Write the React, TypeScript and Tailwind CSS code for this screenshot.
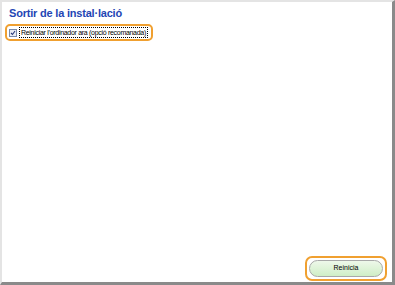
export default function App() {
  return (
    <div
      className="w-[395px] h-[285px] bg-white border-t-2 border-l-2 border-t-[#e4e4e4] border-l-[#e4e4e4] border-r-[3px] border-b-[3px] border-r-[#8a8a8a] border-b-[#8a8a8a] flex flex-col"
      style={{ fontFamily: '"Liberation Sans", Arial, sans-serif' }}
    >
      <div className="pl-[7px] pt-[5px] text-[11px] font-bold tracking-[-0.2px] text-[#2446b4] leading-[13px]">
        Sortir de la instal·lació
      </div>
      <div className="ml-[3px] mt-[4px] self-start flex items-center gap-[2px] border-2 border-[#f0a030] rounded-[5px] pl-[2px] pr-[3px] py-[1px]">
        <span className="w-[8px] h-[8px] border border-[#7a8aa8] bg-[#e8ecf4] flex items-center justify-center">
          <svg width="6" height="6" viewBox="0 0 6 6">
            <path d="M1 3 L2.5 4.5 L5 1" fill="none" stroke="#2a3a7a" strokeWidth="1.1" />
          </svg>
        </span>
        <span className="text-[7px] tracking-[-0.3px] leading-[9px] text-black border border-dotted border-black px-[1px]">
          Reiniciar l’ordinador ara (opció recomanada)
        </span>
      </div>
      <div className="flex-1" />
      <div className="flex justify-end pr-[5px] pb-[1px]">
        <div className="border-2 border-[#f0a030] rounded-[7px] px-[2px] py-[2px]">
          <div className="w-[74px] h-[17px] rounded-full border border-[#a8a8a8] bg-gradient-to-b from-[#eef8ea] to-[#cfeec6] flex items-center justify-center text-[7px] text-black">
            Reinicia
          </div>
        </div>
      </div>
    </div>
  );
}
